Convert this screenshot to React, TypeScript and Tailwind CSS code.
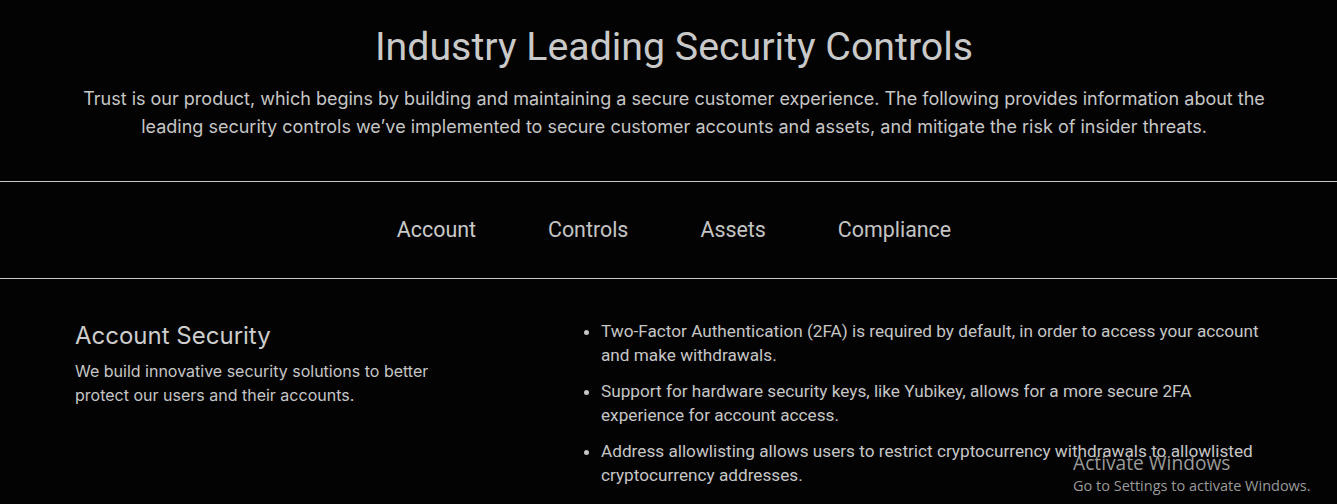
import { useState } from 'react';
import clsx from 'clsx';

const tabs = ['Account', 'Controls', 'Assets', 'Compliance'];

const bullets = [
  'Two-Factor Authentication (2FA) is required by default, in order to access your account and make withdrawals.',
  'Support for hardware security keys, like Yubikey, allows for a more secure 2FA experience for account access.',
  'Address allowlisting allows users to restrict cryptocurrency withdrawals to allowlisted cryptocurrency addresses.',
];

export default function App() {
  const [active, setActive] = useState('Account');

  return (
    <div className="relative min-h-[504px] overflow-hidden bg-[#030303] text-[#c6c6c6]">
      <header className="pl-[11px] pt-[26px] pb-[40px] text-center">
        <h1 className="font-['Roboto',sans-serif] text-[39.3px] leading-[42px] text-[#c9c9c9]">
          Industry Leading Security Controls
        </h1>
        <p className="mx-auto mt-[17px] max-w-[1200px] font-['Inter',sans-serif] text-[18px] leading-[28px]">
          Trust is our product, which begins by building and maintaining a secure customer experience. The following
          provides information about the leading security controls we’ve implemented to secure customer accounts and
          assets, and mitigate the risk of insider threats.
        </p>
      </header>

      <nav className="flex h-[98px] items-center justify-center gap-[72px] border-y border-[#c8c8c8] pl-[11px] font-['Roboto',sans-serif] text-[21.4px]">
        {tabs.map((t) => (
          <button
            key={t}
            type="button"
            onClick={() => setActive(t)}
            className={clsx('cursor-pointer', active === t ? 'text-[#cacaca]' : 'text-[#c4c4c4]')}
          >
            {t}
          </button>
        ))}
      </nav>

      <section className="flex pt-[40px] pl-[75px] pr-[72px]">
        <div className="w-[495px] shrink-0">
          <h2 className="mt-[1px] font-['Inter',sans-serif] text-[24px] leading-[32px] text-[#cdcdcd]">
            Account Security
          </h2>
          <p className="mt-[7px] w-[390px] font-['Inter',sans-serif] text-[16px] leading-[24px]">
            We build innovative security solutions to better protect our users and their accounts.
          </p>
        </div>
        <ul className="flex-1 list-disc pl-[31px] font-['Roboto',sans-serif] text-[17.2px] leading-[24px]">
          {bullets.map((b) => (
            <li key={b} className="mb-[12px] marker:text-[#c6c6c6]">
              {b}
            </li>
          ))}
        </ul>
      </section>

      <div className="pointer-events-none absolute left-[1073px] top-[450px] font-['Open_Sans','Noto_Sans',sans-serif] text-[#9a9a9a]">
        <div className="text-[19.2px] leading-[26px]">Activate Windows</div>
        <div className="text-[14.5px] leading-[20px]">Go to Settings to activate Windows.</div>
      </div>
    </div>
  );
}
